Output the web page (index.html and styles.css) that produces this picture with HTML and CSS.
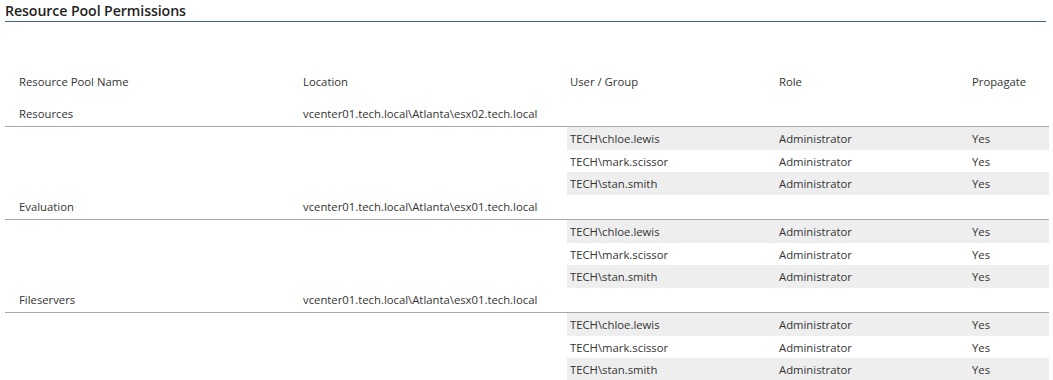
FILE: index.html
```html
<!DOCTYPE html>
<html>
<head>
<meta charset="utf-8">
<link rel="stylesheet" href="styles.css">
</head>
<body>
<div class="page">
  <h2 class="title">Resource Pool Permissions</h2>
  <div class="table">
    <div class="row head">
      <div class="c main">Resource Pool Name</div>
      <div class="c main">Location</div>
      <div class="c sub">User / Group</div>
      <div class="c sub">Role</div>
      <div class="c sub">Propagate</div>
    </div>

    <div class="row pool">
      <div class="c main">Resources</div>
      <div class="c main">vcenter01.tech.local\Atlanta\esx02.tech.local</div>
      <div class="c"></div><div class="c"></div><div class="c"></div>
    </div>
    <div class="row perm odd"><div class="spacer"></div><div class="c sub">TECH\chloe.lewis</div><div class="c sub">Administrator</div><div class="c sub">Yes</div></div>
    <div class="row perm short"><div class="spacer"></div><div class="c sub">TECH\mark.scissor</div><div class="c sub">Administrator</div><div class="c sub">Yes</div></div>
    <div class="row perm odd"><div class="spacer"></div><div class="c sub">TECH\stan.smith</div><div class="c sub">Administrator</div><div class="c sub">Yes</div></div>

    <div class="row pool">
      <div class="c main">Evaluation</div>
      <div class="c main">vcenter01.tech.local\Atlanta\esx01.tech.local</div>
      <div class="c"></div><div class="c"></div><div class="c"></div>
    </div>
    <div class="row perm odd"><div class="spacer"></div><div class="c sub">TECH\chloe.lewis</div><div class="c sub">Administrator</div><div class="c sub">Yes</div></div>
    <div class="row perm short"><div class="spacer"></div><div class="c sub">TECH\mark.scissor</div><div class="c sub">Administrator</div><div class="c sub">Yes</div></div>
    <div class="row perm odd"><div class="spacer"></div><div class="c sub">TECH\stan.smith</div><div class="c sub">Administrator</div><div class="c sub">Yes</div></div>

    <div class="row pool">
      <div class="c main">Fileservers</div>
      <div class="c main">vcenter01.tech.local\Atlanta\esx01.tech.local</div>
      <div class="c"></div><div class="c"></div><div class="c"></div>
    </div>
    <div class="row perm odd"><div class="spacer"></div><div class="c sub">TECH\chloe.lewis</div><div class="c sub">Administrator</div><div class="c sub">Yes</div></div>
    <div class="row perm short"><div class="spacer"></div><div class="c sub">TECH\mark.scissor</div><div class="c sub">Administrator</div><div class="c sub">Yes</div></div>
    <div class="row perm odd"><div class="spacer"></div><div class="c sub">TECH\stan.smith</div><div class="c sub">Administrator</div><div class="c sub">Yes</div></div>
  </div>
</div>
</body>
</html>
```

FILE: styles.css
```css
html, body {
  margin: 0;
  padding: 0;
  background: #ffffff;
}
body {
  font-family: "Open Sans", "Noto Sans", "Liberation Sans", sans-serif;
  font-size: 11.3px;
  color: #333333;
}
.page {
  margin: 0 4px 0 5px;
}
.title {
  margin: 0 3px 0 0;
  font-size: 14.2px;
  font-weight: 600;
  color: #1f1f1f;
  line-height: 21px;
  border-bottom: 1px solid #3a6a88;
  letter-spacing: -0.1px;
}
.table {
  display: flex;
  flex-direction: column;
  margin-top: 48px;
}
.row {
  display: grid;
  grid-template-columns: 284px 278px 209px 193px 1fr;
  height: 23px;
  align-items: center;
}
.row.head {
  height: 22px;
  margin-bottom: 10px;
}
.row.pool {
  height: 24px;
  padding-bottom: 1px;
  box-sizing: border-box;
  border-bottom: 1px solid #a8a8a8;
  height: 25px;
}
.row.perm {
  grid-template-columns: 562px 209px 193px 1fr;
}
.row.perm.short {
  height: 22px;
}
.row.perm.odd .c {
  background: #eeeeee;
}
.c {
  height: 100%;
  display: flex;
  align-items: center;
  white-space: nowrap;
}
.c.main {
  padding-left: 14px;
}
.c.sub {
  padding-left: 3px;
}
```
